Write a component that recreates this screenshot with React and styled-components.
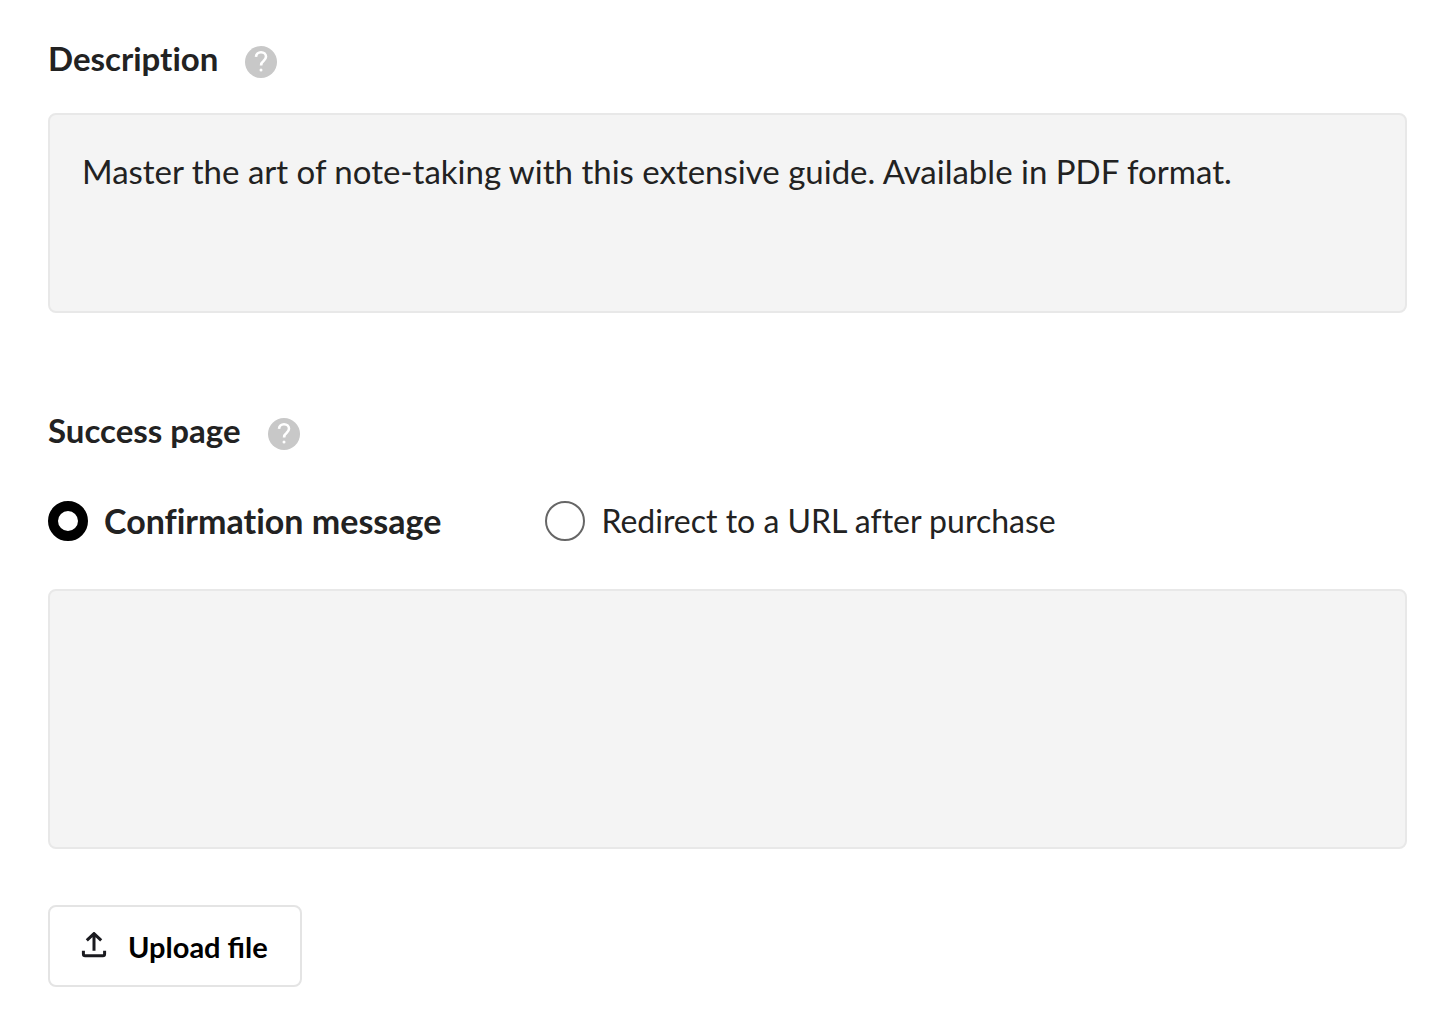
import { useState } from "react";
import styled, { createGlobalStyle } from "styled-components";

function HelpIcon() {
  return (
    <svg width="32" height="32" viewBox="0 0 32 32" aria-hidden="true">
      <circle cx="16" cy="16" r="16" fill="#c8c8c8" />
      <path
        d="M11 10.8a5 5 0 0 1 5-4.6c2.9 0 5 1.9 5 4.6 0 2-1.1 3-2.5 4.2-1.5 1.2-2.4 2-2.4 4.4"
        fill="none"
        stroke="#fff"
        strokeWidth="2.6"
      />
      <circle cx="16" cy="23.9" r="1.5" fill="#fff" />
    </svg>
  );
}

function UploadIcon() {
  return (
    <svg width="28" height="28" viewBox="0 0 28 28" aria-hidden="true">
      <path
        d="M14 18.8V1.8M6.8 8.4L14 1.6l7.2 6.8M3.4 18.8v3.2q0 1.7 1.7 1.7h17.8q1.7 0 1.7-1.7v-3.2"
        fill="none"
        stroke="#1a1a1f"
        strokeWidth="3"
      />
    </svg>
  );
}

function App() {
  const [description, setDescription] = useState(
    "Master the art of note-taking with this extensive guide. Available in PDF format."
  );
  const [message, setMessage] = useState("");
  const [successType, setSuccessType] = useState("message");

  return (
    <Form>
      <GlobalStyle />
      <LabelRow>
        <Label htmlFor="description">Description</Label>
        <HelpButton type="button" aria-label="About the description">
          <HelpIcon />
        </HelpButton>
      </LabelRow>
      <TextArea
        id="description"
        $height="200px"
        value={description}
        onChange={(e) => setDescription(e.target.value)}
      />

      <SuccessSection>
        <LabelRow>
          <Label as="span" id="success-label">
            Success page
          </Label>
          <HelpButton type="button" aria-label="About the success page">
            <HelpIcon />
          </HelpButton>
        </LabelRow>
        <RadioGroup role="radiogroup" aria-labelledby="success-label">
          <RadioLabel $checked={successType === "message"}>
            <Radio
              name="success"
              checked={successType === "message"}
              onChange={() => setSuccessType("message")}
            />
            Confirmation message
          </RadioLabel>
          <RadioLabel $checked={successType === "redirect"}>
            <Radio
              name="success"
              checked={successType === "redirect"}
              onChange={() => setSuccessType("redirect")}
            />
            Redirect to a URL after purchase
          </RadioLabel>
        </RadioGroup>
        <TextArea
          aria-labelledby="success-label"
          $height="260px"
          value={message}
          onChange={(e) => setMessage(e.target.value)}
        />
      </SuccessSection>

      <UploadButton type="button">
        <UploadIcon />
        Upload file
      </UploadButton>
    </Form>
  );
}

const GlobalStyle = createGlobalStyle`
  * {
    box-sizing: border-box;
  }

  body {
    margin: 0;
    background-color: #fff;
    color: #222;
    font-family: Lato, "Liberation Sans", sans-serif;
    font-variant-ligatures: none;
  }
`;

const Form = styled.form`
  padding: 38px 35px 24px 48px;
`;

const LabelRow = styled.div`
  display: flex;
  align-items: flex-end;
  column-gap: 27px;
`;

const Label = styled.label`
  font-size: 33px;
  font-weight: 700;
  line-height: 40px;
`;

const HelpButton = styled.button`
  display: flex;
  padding: 0;

  border: none;
  border-radius: 50%;
  background: none;
  cursor: pointer;
`;

const TextArea = styled.textarea`
  display: block;
  width: 100%;
  height: ${({ $height }) => $height};
  margin-top: 35px;
  padding: 35px 32px;

  border: 2px solid #e8e8e8;
  border-radius: 8px;
  outline: none;
  background-color: #f4f4f4;
  color: inherit;
  resize: none;

  font-family: inherit;
  font-size: 33px;
  line-height: 42px;
`;

const SuccessSection = styled.section`
  margin-top: 97px;
`;

const RadioGroup = styled.div`
  display: flex;
  column-gap: 104px;

  margin-top: 51px;
  margin-bottom: 48px;

  & + ${TextArea} {
    margin-top: 0;
  }
`;

const RadioLabel = styled.label`
  display: flex;
  align-items: center;
  column-gap: 16px;

  font-size: ${({ $checked }) => ($checked ? "34px" : "32px")};
  font-weight: ${({ $checked }) => ($checked ? 700 : 400)};
  line-height: 40px;
  cursor: pointer;
`;

const Radio = styled.input.attrs({ type: "radio" })`
  appearance: none;
  flex-shrink: 0;
  width: 40px;
  height: 40px;
  margin: 0;

  border: 2px solid #666;
  border-radius: 50%;
  background-color: #fff;
  cursor: pointer;

  &:checked {
    border: 10px solid #000;
  }
`;

const UploadButton = styled.button`
  display: flex;
  align-items: center;
  column-gap: 20px;

  height: 82px;
  margin-top: 56px;
  padding: 0 32px 0 30px;

  border: 2px solid #e4e4e4;
  border-radius: 8px;
  background-color: #fff;
  color: #000;
  cursor: pointer;

  font-family: inherit;
  font-size: 29px;
  font-weight: 700;
`;

export default App;
